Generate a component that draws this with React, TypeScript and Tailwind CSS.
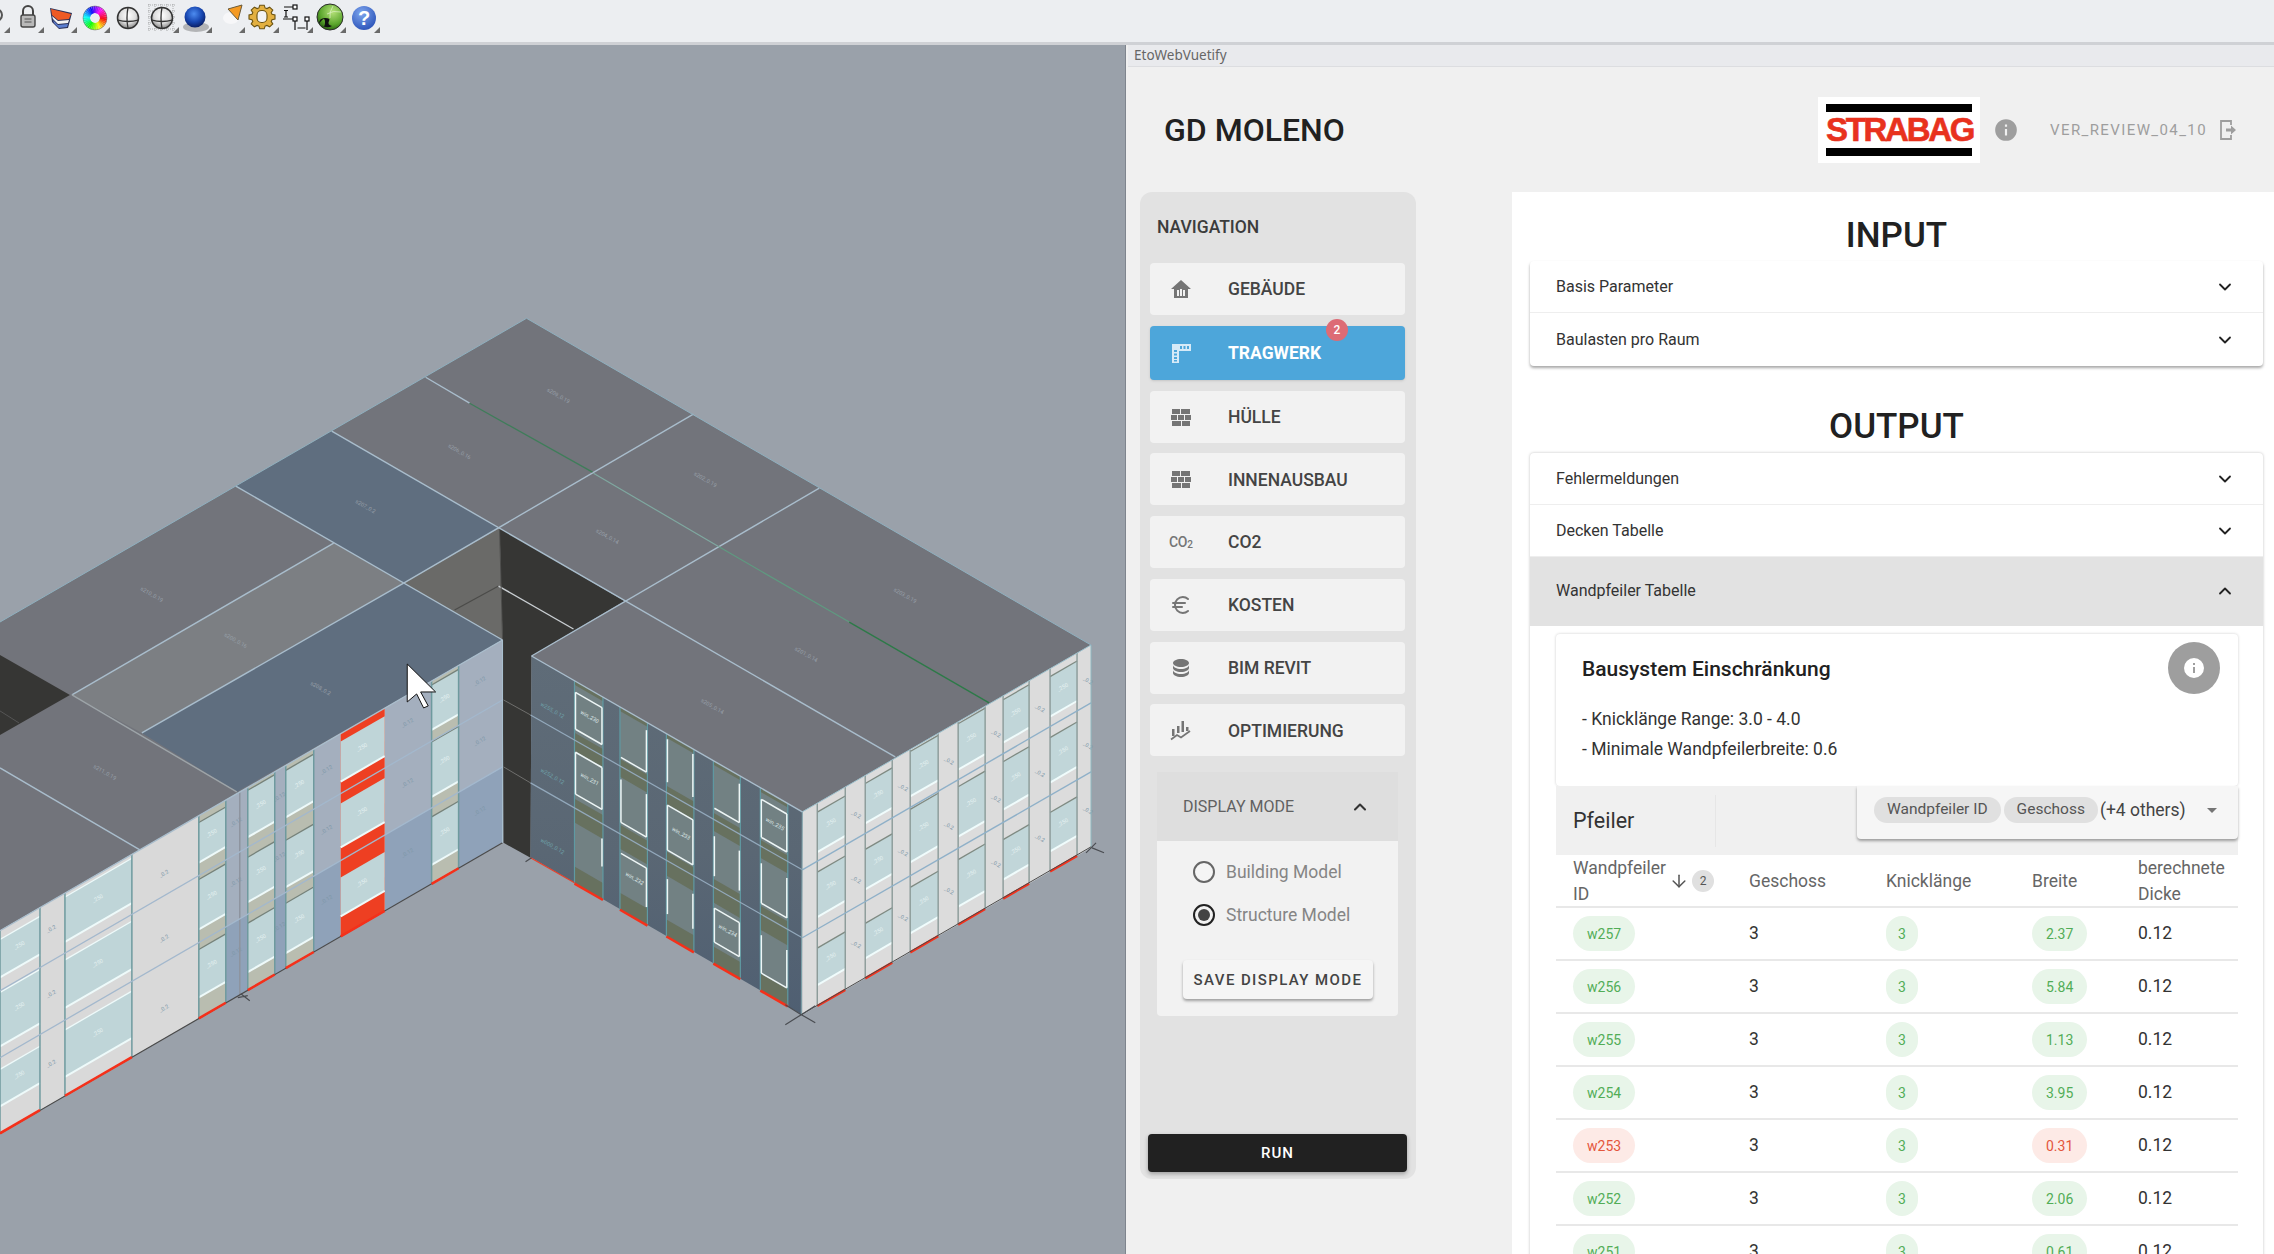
import React from "react";
import { ChevronDown, ChevronUp, ArrowDown, Euro } from "lucide-react";

type P = [number, number];
const pts = (a: P[]) => a.map((p) => p.join(",")).join(" ");
const wallL = (x: number, z: number): P => [x, 640 + (503 - x) * 0.578 + z];
const wallD = (x: number, z: number): P => [x, 656 + (x - 532) * 0.576 + z];
const wallR = (x: number, z: number): P => [x, 812 - (x - 803) * 0.578 + z];
type W = (x: number, z: number) => P;
const para = (f: W, x1: number, x2: number, z1: number, z2: number) => pts([f(x1, z1), f(x2, z1), f(x2, z2), f(x1, z2)]);

const ROOF_LINE = "#a9bdcc";

const lCols: { x: [number, number]; win: [number, number][]; sill: string }[] = [
  { x: [432, 459], win: [[4, 49], [61, 116], [136, 184]], sill: "#b9bdb0" },
  { x: [286, 314], win: [[5, 52], [75, 122], [138, 188]], sill: "#b9bdb0" },
  { x: [248, 275], win: [[3, 50], [70, 115], [136, 185]], sill: "#b9bdb0" },
  { x: [199, 226], win: [[7, 47], [64, 114], [134, 182]], sill: "#b9bdb0" },
  { x: [65, 132], win: [[4, 49], [67, 115], [137, 184]], sill: "#d9d9d9" },
  { x: [0, 40], win: [[9, 47], [62, 116], [139, 176]], sill: "#d9d9d9" },
];
const rCols: { x: [number, number]; win: [number, number][] }[] = [
  { x: [818, 846], win: [[9, 49], [69, 114], [145, 182]] },
  { x: [866, 893], win: [[8, 48], [74, 114], [148, 183]] },
  { x: [911, 939], win: [[2, 47], [60, 113], [138, 184]] },
  { x: [959, 986], win: [[2, 48], [65, 115], [138, 185]] },
  { x: [1004, 1030], win: [[4, 47], [66, 114], [144, 184]] },
  { x: [1051, 1078], win: [[8, 48], [69, 114], [144, 183]] },
];
const dCols: [number, number][] = [[575, 603.5], [620.5, 648], [667, 694.5], [714, 741], [761, 788.5]];
const dFrames: { c: number; z: [number, number]; top?: boolean; bot?: boolean; l?: boolean; r?: boolean }[] = [
  { c: 0, z: [11, 48], top: true, bot: true, l: true, r: true },
  { c: 0, z: [71, 113], top: true, bot: true, l: true, r: true },
  { c: 0, z: [142, 170], r: true },
  { c: 1, z: [8, 50], bot: true, r: true },
  { c: 1, z: [72, 115], bot: true, l: true, r: true },
  { c: 1, z: [146, 185], top: true, r: true },
  { c: 2, z: [5, 48], l: true, r: true },
  { c: 2, z: [71, 116], top: true, bot: true, l: true, r: true },
  { c: 2, z: [145, 180], l: true, r: true },
  { c: 3, z: [8, 47], bot: true, r: true },
  { c: 3, z: [75, 115], l: true, r: true },
  { c: 3, z: [147, 181], top: true, bot: true, l: true, r: true },
  { c: 4, z: [11, 49], top: true, bot: true, l: true, r: true },
  { c: 4, z: [75, 115], bot: true, l: true, r: true },
  { c: 4, z: [147, 185], bot: true, l: true, r: true },
];
const roofLabels: [string, number, number][] = [
  ["s207_0.2", 365, 508], ["s206_0.16", 459, 453], ["s209_0.19", 558, 397], ["s210_0.19", 151, 596],
  ["s200_0.16", 235, 642], ["s208_0.2", 320, 690], ["s211_0.19", 104, 774], ["s202_0.19", 705, 481],
  ["s204_0.14", 607, 538], ["s203_0.19", 905, 597], ["s201_0.14", 806, 656], ["s205_0.14", 712, 708],
];
const Tiny = ({ t, p, rot, fill }: { t: string; p: P; rot: number; fill: string }) => (
  <text x={p[0]} y={p[1]} transform={`rotate(${rot} ${p[0]} ${p[1]})`} textAnchor="middle" fontSize="5.5" fontFamily="Roboto, sans-serif" fill={fill}>{t}</text>
);

function Scene() {
  return (
    <svg viewBox="0 45 1126 1209" className="block w-full h-full">
      <defs>
        <linearGradient id="darkwall" x1="0" y1="0" x2="0" y2="1">
          <stop offset="0" stopColor="#5f6c78" />
          <stop offset="0.55" stopColor="#5a6774" />
          <stop offset="1" stopColor="#4f5f72" />
        </linearGradient>
      </defs>
      {/* roof */}
      <polygon points={pts([[527, 318], [1092, 645], [803, 812], [532, 656], [625, 601], [500, 528], [404, 583], [503, 640], [0, 931], [0, 622]])} fill="#72747b" />
      <polygon points={pts([[334, 543], [404, 583], [142, 733], [72, 695]])} fill="#7c7f83" />
      <polygon points={pts([[332, 431], [236, 486], [404, 583], [500, 528]])} fill="#5f6e7f" />
      <polygon points={pts([[404, 583], [142, 733], [237, 792], [503, 640]])} fill="#5f6e7f" />
      <polygon points={pts([[625, 601], [532, 656], [531, 858], [504, 843], [503, 640], [500, 528]])} fill="#363634" />
      <polygon points={pts([[500, 528], [404, 583], [503, 640]])} fill="#6a6a68" />
      <polygon points={pts([[0, 655], [70, 695], [0, 735]])} fill="#363634" />
      <line x1="0" y1="711" x2="19" y2="723" stroke="#555" />
      <line x1="455" y1="610" x2="499" y2="586" stroke="#4b4b49" strokeWidth="1.2" />
      <line x1="499" y1="586" x2="574" y2="629" stroke="#c9ced2" strokeWidth="1.4" />
      <line x1="500" y1="528" x2="503" y2="640" stroke="#4d4d4b" />
      {/* left wing wall */}
      <polygon points={pts([wallL(503, 0), wallL(0, 0), wallL(0, 203), wallL(503, 203)])} fill="#d9d9d9" />
      {[[459, 503], [385, 432], [314, 341], [275, 286], [226, 248]].map(([a, b]) => (
        <g key={a}>
          <polygon points={para(wallL, a, b, 0, 127)} fill="#a4afbe" />
          <polygon points={para(wallL, a, b, 127, 203)} fill="#8fa2b9" />
          {[30, 90, 160].map((z) => (
            <Tiny key={z} t="_0.12" p={wallL((a + b) / 2, z)} rot={-30} fill="#7d97a8" />
          ))}
        </g>
      ))}
      <polygon points={para(wallL, 341, 385, 0, 203)} fill="#ee3f22" />
      {[[8, 48], [70, 114], [144, 183]].map(([a, b]) => (
        <g key={a}>
          <polygon points={para(wallL, 341, 385, a, b)} fill="#bfd5d8" />
          <line x1={wallL(341, b)[0]} y1={wallL(341, b)[1]} x2={wallL(385, b)[0]} y2={wallL(385, b)[1]} stroke="#eefafa" strokeWidth="2" />
          <Tiny t="_250" p={wallL(363, (a + b) / 2)} rot={-30} fill="#e6f2f2" />
        </g>
      ))}
      {lCols.map((c) => (
        <g key={c.x[0]}>
          <polygon points={para(wallL, c.x[0], c.x[1], 0, 203)} fill={c.sill} />
          {c.win.map(([a, b]) => (
            <g key={a}>
              <polygon points={para(wallL, c.x[0], c.x[1], a, b)} fill="#bfd5d8" />
              <line x1={wallL(c.x[0], b)[0]} y1={wallL(c.x[0], b)[1]} x2={wallL(c.x[1], b)[0]} y2={wallL(c.x[1], b)[1]} stroke="#eefafa" strokeWidth="2" />
              <line x1={wallL(c.x[0], a)[0]} y1={wallL(c.x[0], a)[1]} x2={wallL(c.x[1], a)[0]} y2={wallL(c.x[1], a)[1]} stroke={c.sill === "#d9d9d9" ? "#eefafa" : "#76827a"} strokeWidth="1.3" />
              <Tiny t="_250" p={wallL((c.x[0] + c.x[1]) / 2, (a + b) / 2)} rot={-30} fill="#e6f2f2" />
            </g>
          ))}
          {c.x.map((x) => (
            <line key={x} x1={wallL(x, 0)[0]} y1={wallL(x, 0)[1]} x2={wallL(x, 203)[0]} y2={wallL(x, 203)[1]} stroke="#6e9a9e" strokeWidth="1.5" />
          ))}
        </g>
      ))}
      {[[165, 40], [165, 105], [165, 175], [52, 30], [52, 95], [52, 165]].map(([x, z]) => (
        <Tiny key={`${x}-${z}`} t="_0.2" p={wallL(x, z)} rot={-30} fill="#7d97a8" />
      ))}
      <line x1="240" y1="792" x2="240" y2="995" stroke="#8d949e" strokeWidth="1.5" />
      <line x1="503" y1="700" x2="0" y2="991" stroke="#a3b8cd" strokeWidth="1.3" />
      <line x1="503" y1="767" x2="0" y2="1058" stroke="#a3b8cd" strokeWidth="1.3" />
      <line x1="503" y1="843" x2="0" y2="1134" stroke="#4a4a4a" strokeWidth="1.2" />
      {[[432, 459], [341, 385], [286, 314], [248, 275], [199, 226], [65, 132], [0, 40]].map(([a, b]) => (
        <line key={a} x1={wallL(a, 203)[0]} y1={wallL(a, 203)[1]} x2={wallL(b, 203)[0]} y2={wallL(b, 203)[1]} stroke="#f5301a" strokeWidth="2.5" />
      ))}
      {/* floor lines over dark column */}
      <line x1="504" y1="700" x2="531" y2="715" stroke="#6f6f6d" />
      <line x1="504" y1="767" x2="531" y2="783" stroke="#6f6f6d" />
      <line x1="503" y1="640" x2="503" y2="843" stroke="#a9c0cf" strokeWidth="1" />
      {/* dark facing wall */}
      <polygon points={pts([wallD(532, 0), wallD(803, 0), wallD(802, 203), wallD(531, 202)])} fill="url(#darkwall)" />
      {dCols.map(([a, b]) => (
        <g key={a}>
          <polygon points={para(wallD, a, b, 0, 203)} fill="#67715f" />
          {[[4, 52], [70, 118], [142, 186]].map(([u, v]) => (
            <polygon key={u} points={para(wallD, a, b, u, v)} fill="#728183" />
          ))}
          <line x1={wallD(a, 0)[0]} y1={wallD(a, 0)[1]} x2={wallD(a, 203)[0]} y2={wallD(a, 203)[1]} stroke="#5f9aa3" strokeWidth="1.2" />
          <line x1={wallD(b, 0)[0]} y1={wallD(b, 0)[1]} x2={wallD(b, 203)[0]} y2={wallD(b, 203)[1]} stroke="#5f9aa3" strokeWidth="1.2" />
        </g>
      ))}
      {dFrames.map((f, i) => {
        const [a, b] = dCols[f.c];
        const s = "#eef6f6";
        const L = (p: P, q: P) => <line x1={p[0]} y1={p[1]} x2={q[0]} y2={q[1]} stroke={s} strokeWidth="1.5" />;
        return (
          <g key={i}>
            {f.top && L(wallD(a + 1, f.z[0]), wallD(b - 1, f.z[0]))}
            {f.bot && L(wallD(a + 1, f.z[1]), wallD(b - 1, f.z[1]))}
            {f.l && L(wallD(a + 1, f.z[0]), wallD(a + 1, f.z[1]))}
            {f.r && L(wallD(b - 1, f.z[0]), wallD(b - 1, f.z[1]))}
          </g>
        );
      })}
      <line x1="531" y1="715" x2="803" y2="870" stroke="#93a9bc" strokeWidth="1.2" />
      <line x1="531" y1="783" x2="803" y2="938" stroke="#93a9bc" strokeWidth="1.2" />
      <line x1="531" y1="858" x2="575" y2="883" stroke="#e8402a" strokeWidth="1.2" />
      {dCols.map(([a, b]) => (
        <line key={a} x1={wallD(a, 203)[0]} y1={wallD(a, 203)[1]} x2={wallD(b, 203)[0]} y2={wallD(b, 203)[1]} stroke="#f5301a" strokeWidth="2.5" />
      ))}
      {/* right wall */}
      <polygon points={pts([wallR(803, 0), wallR(1092, 0), wallR(1092, 203), wallR(803, 203)])} fill="#dcdcdc" />
      {rCols.map((c) => (
        <g key={c.x[0]}>
          {c.win.map(([a, b]) => (
            <g key={a}>
              <polygon points={para(wallR, c.x[0], c.x[1], a, b)} fill="#c1d6d9" />
              <line x1={wallR(c.x[0], b)[0]} y1={wallR(c.x[0], b)[1]} x2={wallR(c.x[1], b)[0]} y2={wallR(c.x[1], b)[1]} stroke="#f0fcfc" strokeWidth="2" />
              <line x1={wallR(c.x[0], a)[0]} y1={wallR(c.x[0], a)[1]} x2={wallR(c.x[1], a)[0]} y2={wallR(c.x[1], a)[1]} stroke="#7f8a82" strokeWidth="1.3" />
              <Tiny t="_250" p={wallR((c.x[0] + c.x[1]) / 2, (a + b) / 2)} rot={-30} fill="#e6f2f2" />
            </g>
          ))}
          {c.x.map((x) => (
            <line key={x} x1={wallR(x, 0)[0]} y1={wallR(x, 0)[1]} x2={wallR(x, 203)[0]} y2={wallR(x, 203)[1]} stroke="#8a9a98" strokeWidth="1.4" />
          ))}
          <line x1={wallR(c.x[0], 203)[0]} y1={wallR(c.x[0], 203)[1]} x2={wallR(c.x[1], 203)[0]} y2={wallR(c.x[1], 203)[1]} stroke="#f5301a" strokeWidth="2.5" />
          {[35, 100, 165].map((z) => (
            <Tiny key={z} t="_0.2" p={wallR(c.x[1] + 10, z)} rot={30} fill="#7d97a8" />
          ))}
        </g>
      ))}
      <line x1="803" y1="870" x2="1092" y2="703" stroke="#8fb0c8" strokeWidth="1.4" />
      <line x1="803" y1="938" x2="1092" y2="772" stroke="#8fb0c8" strokeWidth="1.4" />
      <line x1="803" y1="812" x2="802" y2="1015" stroke="#7aa0a8" />
      <line x1="1092" y1="645" x2="1092" y2="847" stroke="#8fb8c0" />
      <line x1="802" y1="1015" x2="1092" y2="847" stroke="#4a4a4a" strokeWidth="1" />
      {/* crosses */}
      <path d="M786 1025L802 1015L816 1023M802 1015L786 1005M802 1015L816 1006" stroke="#4a4d52" strokeWidth="1.2" fill="none" />
      <path d="M1087 853L1097 843M1093 848L1105 853" stroke="#4a4d52" strokeWidth="1.2" fill="none" />
      <path d="M238 998L248 996M241 994L250 1001" stroke="#4a4d52" strokeWidth="1.2" fill="none" />
      <path d="M526 862L532 858" stroke="#4a4d52" strokeWidth="1.2" fill="none" />
      {/* roof lines */}
      <g stroke={ROOF_LINE} strokeWidth="1.4" fill="none">
        <line x1="426" y1="377" x2="470" y2="403" />
        <line x1="332" y1="431" x2="896" y2="757" />
        <line x1="236" y1="486" x2="503" y2="640" />
        <line x1="694" y1="414" x2="404" y2="583" />
        <line x1="404" y1="583" x2="142" y2="733" />
        <line x1="334" y1="543" x2="72" y2="695" />
        <line x1="72" y1="695" x2="237" y2="792" stroke="#9da4a8" />
        <line x1="820" y1="488" x2="532" y2="656" />
        <line x1="0" y1="768" x2="140" y2="850" />
        <line x1="532" y1="656" x2="803" y2="812" />
        <line x1="503" y1="640" x2="0" y2="931" />
        <line x1="0" y1="622" x2="527" y2="318" stroke="#8fb0bf" strokeWidth="1" />
        <line x1="527" y1="318" x2="1092" y2="645" stroke="#8fb0bf" strokeWidth="1" />
        <line x1="1092" y1="645" x2="803" y2="812" stroke="#9cc0cc" strokeWidth="1" />
      </g>
      <line x1="470" y1="403" x2="593" y2="472" stroke="#3f7d5a" strokeWidth="1.3" />
      <line x1="594" y1="473" x2="720" y2="547" stroke="#7fa8a0" strokeWidth="1.2" />
      <line x1="720" y1="547" x2="850" y2="622" stroke="#5f9a80" strokeWidth="1.2" />
      <line x1="850" y1="622" x2="990" y2="703" stroke="#2d7a48" strokeWidth="1.4" />
      {/* tiny labels */}
      {roofLabels.map(([t, x, y]) => (
        <Tiny key={t} t={t} p={[x, y]} rot={30} fill="#979fa8" />
      ))}
      {[["w255_0.12", 552, 712], ["w252_0.12", 552, 778], ["w000_0.12", 552, 848]].map(([t, x, y]) => (
        <Tiny key={t as string} t={t as string} p={[x as number, y as number]} rot={30} fill="#6fa0a8" />
      ))}
      {dFrames.filter((f) => f.top).map((f, i) => {
        const [a, b] = dCols[f.c];
        return <Tiny key={i} t={`win_${230 + i}`} p={wallD((a + b) / 2, (f.z[0] + f.z[1]) / 2)} rot={30} fill="#dfe8e8" />;
      })}
      {/* cursor */}
      <polygon points="407.6,664 407.6,702 417,694 424,708 428.6,706 421,692 436,692" fill="#ffffff" stroke="#111" strokeWidth="1" strokeLinejoin="round" />
    </svg>
  );
}

function ToolbarIcons() {
  const tri = [7, 41, 74, 107, 176, 209, 242, 276, 310, 343, 377];
  const wheel = Array.from({ length: 36 }, (_, i) => i);
  const gear = (() => {
    const cx = 262, cy = 17, out: string[] = [];
    for (let i = 0; i < 8; i++) {
      const a = (i / 8) * Math.PI * 2;
      [[-0.3, 9.5], [-0.17, 12], [0.17, 12], [0.3, 9.5]].forEach(([d, r]) => {
        out.push(`${(cx + Math.cos(a + d) * r * 1.1).toFixed(1)},${(cy + Math.sin(a + d) * r).toFixed(1)}`);
      });
    }
    return out.join(" ");
  })();
  return (
    <svg viewBox="0 0 400 42" className="block w-[400px] h-[42px]">
      <defs>
        <radialGradient id="ball" cx="0.45" cy="0.35" r="0.65">
          <stop offset="0" stopColor="#4d8cf0" />
          <stop offset="0.6" stopColor="#1746b0" />
          <stop offset="1" stopColor="#0a1f66" />
        </radialGradient>
        <radialGradient id="grey" cx="0.5" cy="0.38" r="0.62">
          <stop offset="0" stopColor="#ffffff" />
          <stop offset="0.6" stopColor="#dcdcdc" />
          <stop offset="1" stopColor="#858585" />
        </radialGradient>
        <radialGradient id="green" cx="0.6" cy="0.3" r="0.7">
          <stop offset="0" stopColor="#b6e27a" />
          <stop offset="0.7" stopColor="#5aa52c" />
          <stop offset="1" stopColor="#2f6a14" />
        </radialGradient>
        <radialGradient id="help" cx="0.4" cy="0.3" r="0.75">
          <stop offset="0" stopColor="#7ea6ee" />
          <stop offset="1" stopColor="#2a52b8" />
        </radialGradient>
      </defs>
      <circle cx="-4" cy="15" r="6" fill="none" stroke="#555" strokeWidth="2" />
      {tri.map((x) => (
        <polygon key={x} points={`${x - 3},33 ${x + 3},33 ${x + 3},27`} fill="#6a6a6a" />
      ))}
      {/* lock */}
      <path d="M23 15V11a5 5 0 0 1 10 0v4" fill="none" stroke="#444" strokeWidth="2" />
      <rect x="21" y="15" width="14" height="12" rx="2" fill="#b9b9b9" stroke="#444" strokeWidth="1.4" />
      <path d="M24.5 19h7M24.5 22h7" stroke="#555" strokeWidth="1" />
      {/* layers */}
      <polygon points="50,8 72,13 68,28 59,29 52,22" fill="#2a3158" />
      <polygon points="51,9 71,14 69,19 58,20 52,15" fill="#ee5a24" />
      <polygon points="52,16 58,21 69,20 68,23 58,24 53,19" fill="#f4f4f4" />
      <polygon points="53,20 58,25 68,24 67,27 59,28 54,23" fill="#5c7ed0" />
      {/* wheel */}
      {wheel.map((i) => {
        const a = (i / 36) * Math.PI * 2, b = ((i + 1.2) / 36) * Math.PI * 2;
        return <line key={i} x1={95 + Math.cos(a) * 8.5} y1={18 + Math.sin(a) * 8.5} x2={95 + Math.cos(b) * 8.5} y2={18 + Math.sin(b) * 8.5} stroke={`hsl(${i * 10},95%,52%)`} strokeWidth="7" />;
      })}
      <circle cx="95" cy="18" r="12" fill="none" stroke="#55555590" strokeWidth="0.8" />
      {/* spheres */}
      <circle cx="128" cy="18" r="10.5" fill="url(#grey)" stroke="#333" strokeWidth="1.5" />
      <path d="M117.5 20q10.5 3 21 0M128 7.5q-2 10 0 21" fill="none" stroke="#333" strokeWidth="1.3" />
      <g stroke="#8f8f8f" strokeWidth="0.7" strokeDasharray="1 1">
        {[149, 155, 161, 167, 173].map((x) => <line key={x} x1={x} y1="4" x2={x} y2="31" />)}
        {[5, 11, 17, 23, 29].map((y) => <line key={y} x1="148" y1={y} x2="176" y2={y} />)}
      </g>
      <circle cx="162" cy="18" r="10.5" fill="url(#grey)" stroke="#333" strokeWidth="1.5" />
      <path d="M151.5 20q10.5 3 21 0M162 7.5q-2 10 0 21" fill="none" stroke="#333" strokeWidth="1.3" />
      <ellipse cx="196" cy="27" rx="13" ry="5" fill="#55555560" />
      <circle cx="195" cy="17" r="10.5" fill="url(#ball)" />
      {/* cone */}
      <ellipse cx="231" cy="18" rx="8" ry="6" fill="#f7f7f9" />
      <polygon points="228,9 242,5 238,20" fill="#f59a23" stroke="#6a5a3a" strokeWidth="1" />
      {/* gear */}
      <polygon points={gear} fill="#e3b040" stroke="#6a5210" strokeWidth="1.1" />
      <rect x="257" y="10.5" width="10" height="12" rx="4.5" fill="#f3f3f3" stroke="#6a5210" strokeWidth="1.1" />
      {/* dimension */}
      <g stroke="#111" strokeWidth="1.2" fill="#fff">
        <path d="M284 7h9M286 10.5v6.5M284 10.5h4M284 17h4M283 19h10M295 21v9M307 21v9M297.5 28h8" fill="none" />
        <rect x="293" y="5" width="4" height="4" />
        <rect x="293" y="17" width="4" height="4" />
        <rect x="305" y="17" width="4" height="4" />
      </g>
      {/* globe */}
      <circle cx="330" cy="17" r="13" fill="url(#green)" stroke="#2b2b2b" strokeWidth="1" />
      <path d="M319 24q6-9 6-2t-4 3q6 4 11 1q-5-1-3-5q2-3-4-3q-6 0-6 6z" fill="#0e0e0e" />
      <path d="M327 14q6-4 14-2M333 6q-4 6-3 12" fill="none" stroke="#e0f0c8" strokeWidth="0.7" />
      {/* help */}
      <circle cx="364" cy="18" r="12" fill="url(#help)" />
      <text x="364" y="25" textAnchor="middle" fontSize="20" fontWeight="700" fontFamily="Liberation Sans, sans-serif" fill="#fff">?</text>
    </svg>
  );
}

const mdiPath = {
  wall: "M3 16H12V21H3V16M2 10H8V15H2V10M9 10H15V15H9V10M16 10H22V15H16V10M13 16H21V21H13V16M3 4H11V9H3V4M12 4H21V9H12V4Z",
  db: "M12,3C7.58,3 4,4.79 4,7C4,9.21 7.58,11 12,11C16.42,11 20,9.21 20,7C20,4.79 16.42,3 12,3M4,9V12C4,14.21 7.58,16 12,16C16.42,16 20,14.21 20,12V9C20,11.21 16.42,13 12,13C7.58,13 4,11.21 4,9M4,14V17C4,19.21 7.58,21 12,21C16.42,21 20,19.21 20,17V14C20,16.21 16.42,18 12,18C7.58,18 4,16.21 4,14Z",
  info: "M13,9H11V7H13M13,17H11V11H13M12,2A10,10 0 0,0 2,12A10,10 0 0,0 12,22A10,10 0 0,0 12,2Z",
};
const Fill = ({ d, className }: { d: string; className?: string }) => (
  <svg viewBox="0 0 24 24" className={className} fill="currentColor"><path d={d} fillRule="evenodd" /></svg>
);

const IconHouse = () => (
  <svg viewBox="0 0 24 24" className="w-6 h-6" fill="currentColor">
    <path fillRule="evenodd" d="M12 3L2 12H5V21H19V12H22ZM8 13H10V19H8ZM11 12H13V19H11ZM14 13H16V19H14Z" />
  </svg>
);
const IconRuler = () => (
  <svg viewBox="0 0 24 24" className="w-6 h-6" fill="currentColor">
    <path fillRule="evenodd" d="M3 3H22V10H10V22H3ZM11 5V8H13V5ZM14.5 5V8H16.5V5ZM18 5V8H20V5ZM5 9V11H8V9ZM5 12.5V14.5H8V12.5ZM5 16V18H8V16ZM5 19V20.5H8V19Z" />
  </svg>
);
const IconOpt = () => (
  <svg viewBox="0 0 24 24" className="w-6 h-6" fill="currentColor">
    <rect x="3" y="11" width="2.5" height="7" />
    <rect x="8" y="8" width="2.5" height="7" />
    <rect x="12.5" y="3" width="2.5" height="11" />
    <rect x="17" y="9" width="2.5" height="4" />
    <path d="M2 21.5L8 17L12 19.5L21 13" fill="none" stroke="currentColor" strokeWidth="1.8" />
  </svg>
);
const IconCo2 = () => (
  <span className="flex items-baseline text-[14px] font-medium tracking-[-0.3px]">
    CO<span className="text-[10px] leading-none translate-y-[1px]">2</span>
  </span>
);

const navItems: { label: string; icon: React.ReactNode }[] = [
  { label: "GEBÄUDE", icon: <IconHouse /> },
  { label: "TRAGWERK", icon: <IconRuler /> },
  { label: "HÜLLE", icon: <Fill d={mdiPath.wall} className="w-6 h-6" /> },
  { label: "INNENAUSBAU", icon: <Fill d={mdiPath.wall} className="w-6 h-6" /> },
  { label: "CO2", icon: <IconCo2 /> },
  { label: "KOSTEN", icon: <Euro className="w-6 h-6" strokeWidth={2} /> },
  { label: "BIM REVIT", icon: <Fill d={mdiPath.db} className="w-6 h-6" /> },
  { label: "OPTIMIERUNG", icon: <IconOpt /> },
];

function Nav() {
  return (
    <div className="flex flex-col w-[276px] h-[987px] shrink-0 ml-[12px] rounded-xl bg-[#e2e2e2] pb-[7px]">
      <div className="h-[71px] pl-[17px] flex items-center text-[17.5px] font-medium text-[#3c3c3c]">NAVIGATION</div>
      <div className="flex flex-col gap-[10.75px] ml-[10px] w-[255px]">
        {navItems.map((n) => {
          const active = n.label === "TRAGWERK";
          return (
            <div
              key={n.label}
              className={
                active
                  ? "relative flex items-center h-[54px] rounded bg-[#4da6da] text-white shadow-sm"
                  : "relative flex items-center h-[52px] rounded bg-[#f2f2f2]"
              }
            >
              <span className={active ? "w-[78px] pl-[19px] text-[#d6eaf7]" : "w-[78px] pl-[19px] text-[#757575]"}>{n.icon}</span>
              <span className={active ? "pt-[1px] text-[17.5px] font-bold" : "pt-[1px] text-[17.5px] font-medium text-[#444444]"}>{n.label}</span>
              {active && (
                <span className="absolute left-[176px] top-[-7px] flex items-center justify-center w-[22px] h-[22px] rounded-full bg-[#dd6b75] text-white text-xs font-medium">2</span>
              )}
            </div>
          );
        })}
      </div>
      <div className="ml-[17px] mt-[16px] w-[241px]">
        <div className="flex items-center justify-between h-[69px] pl-[26px] pr-[28px] bg-[#dedede] text-base text-[#616161]">
          <span>DISPLAY MODE</span>
          <ChevronUp className="w-5 h-5 text-[#333333]" strokeWidth={2.5} />
        </div>
        <div className="bg-[#f2f2f2] h-[175px] rounded-b-sm flex flex-col">
          <div className="flex items-center h-[22px] mt-[20px] pl-[36px] gap-[11px] text-[17.5px] text-[#858585]">
            <span className="w-[22px] h-[22px] rounded-full border-2 border-[#666666] bg-[#f5f5f5]" />
            <span>Building Model</span>
          </div>
          <div className="flex items-center h-[22px] mt-[21px] pl-[36px] gap-[11px] text-[17.5px] text-[#858585]">
            <span className="flex items-center justify-center w-[22px] h-[22px] rounded-full border-2 border-[#222222]">
              <span className="w-[12px] h-[12px] rounded-full bg-[#444444]" />
            </span>
            <span>Structure Model</span>
          </div>
          <div className="flex items-center justify-center ml-[26px] mt-[34px] w-[190px] h-[39px] rounded bg-[#f5f5f5] shadow-[0_2px_3px_rgba(0,0,0,0.35)] text-[15px] font-medium tracking-[1.4px] text-[#444444]">
            SAVE DISPLAY MODE
          </div>
        </div>
      </div>
      <div className="mt-auto ml-[8px] w-[259px] h-[38px] rounded bg-[#212121] text-white text-[15px] font-medium tracking-[1px] flex items-center justify-center shadow-[0_2px_4px_rgba(0,0,0,0.3)]">RUN</div>
    </div>
  );
}

function AccRow({ label, tall, last }: { label: string; tall?: boolean; last?: boolean }) {
  const h = tall ? "h-[53px]" : "h-[52px]";
  const b = last ? "" : "border-b border-[#eeeeee]";
  return (
    <div className={`flex items-center justify-between ${h} pl-[26px] pr-[28px] ${b}`}>
      <span className="text-base text-[#333333]">{label}</span>
      <ChevronDown className="w-5 h-5 text-[#222222]" strokeWidth={2.2} />
    </div>
  );
}

const rows: { id: string; b: string; bad?: boolean; badId?: boolean }[] = [
  { id: "w257", b: "2.37" },
  { id: "w256", b: "5.84" },
  { id: "w255", b: "1.13" },
  { id: "w254", b: "3.95" },
  { id: "w253", b: "0.31", bad: true, badId: true },
  { id: "w252", b: "2.06" },
  { id: "w251", b: "0.61" },
];

const Chip = ({ t, bad }: { t: string; bad?: boolean }) => (
  <span className={bad ? "inline-flex items-center h-[35px] px-[14px] rounded-full bg-[#fdeae6] text-[#e4563c] text-sm" : "inline-flex items-center h-[35px] px-[14px] rounded-full bg-[#e8f5e9] text-[#52ad57] text-sm"}>{t}</span>
);

function Table() {
  const cols = "grid grid-cols-[176px_137px_146px_106px_100px] pl-[17px] items-center";
  return (
    <div>
      <div className={`${cols} h-[53px] border-b-2 border-[#e8e8e8] text-[17.5px] text-[#666666]`}>
        <div className="flex items-center">
          <span className="w-[96px] leading-[26px]">Wandpfeiler ID</span>
          <ArrowDown className="w-5 h-5 text-[#555555]" strokeWidth={1.8} />
          <span className="flex items-center justify-center w-[22px] h-[22px] ml-[3px] rounded-full bg-[#e0e0e0] text-xs text-[#555555]">2</span>
        </div>
        <span>Geschoss</span>
        <span>Knicklänge</span>
        <span>Breite</span>
        <span className="leading-[26px]">berechnete Dicke</span>
      </div>
      {rows.map((r) => (
        <div key={r.id} className={`${cols} h-[53px] border-b-2 border-[#e8e8e8] text-[17.5px] text-[#333333]`}>
          <div><Chip t={r.id} bad={r.badId} /></div>
          <span>3</span>
          <div>
            <span className="inline-flex items-center h-[35px] px-[12px] rounded-full bg-[#e8f5e9] text-[#52ad57] text-sm">3</span>
          </div>
          <div><Chip t={r.b} bad={r.bad} /></div>
          <span>0.12</span>
        </div>
      ))}
    </div>
  );
}

function Main() {
  return (
    <div className="flex-1 ml-[96px] bg-white pl-[18px] pr-[11px]">
      <h2 className="flex items-center justify-center h-[69px] pt-[20px] text-[35px] font-medium text-[#212121]">INPUT</h2>
      <div className="rounded shadow-[0_2px_3px_rgba(0,0,0,0.35)] bg-white">
        <AccRow label="Basis Parameter" />
        <AccRow label="Baulasten pro Raum" tall last />
      </div>
      <h2 className="flex items-center justify-center h-[87px] pt-[36px] text-[35px] font-medium text-[#212121]">OUTPUT</h2>
      <div className="rounded-t shadow-[0_0_3px_rgba(0,0,0,0.25)] bg-white">
        <AccRow label="Fehlermeldungen" />
        <AccRow label="Decken Tabelle" />
        <div className="flex items-center justify-between h-[69px] pb-[2px] pl-[26px] pr-[28px] bg-[#e2e2e2]">
          <span className="text-base text-[#333333]">Wandpfeiler Tabelle</span>
          <ChevronUp className="w-5 h-5 text-[#222222]" strokeWidth={2.2} />
        </div>
        <div className="pt-[8px] pl-[26px] pr-[25px]">
          <div className="h-[152px] rounded bg-white shadow-[0_0_3px_rgba(0,0,0,0.2)]">
            <div className="flex items-center justify-between h-[60px] pt-[8px] pl-[26px] pr-[18px]">
              <span className="pt-[3px] text-[21px] font-medium text-[#212121]">Bausystem Einschränkung</span>
              <span className="flex items-center justify-center w-[52px] h-[52px] rounded-full bg-[#9e9e9e]">
                <Fill d={mdiPath.info} className="w-6 h-6 text-white" />
              </span>
            </div>
            <div className="pt-[10px] pl-[26px] text-[17.5px] leading-[30px] text-[#333333]">
              <div>- Knicklänge Range: 3.0 - 4.0</div>
              <div>- Minimale Wandpfeilerbreite: 0.6</div>
            </div>
          </div>
          <div className="flex justify-between h-[69px] bg-[#f0f0f0]">
            <div className="flex items-center w-[160px] h-[52px] mt-[9px] pl-[17px] border-r border-[#e6e6e6] text-[21.5px] text-[#333333]">Pfeiler</div>
            <div className="flex items-center w-[381px] h-[53px] pb-[5px] pl-[17px] bg-[#f6f6f6] rounded-b shadow-[0_2px_3px_rgba(0,0,0,0.35)]">
              <span className="flex items-center h-[26px] px-[13px] rounded-full bg-[#e0e0e0] text-[15.5px] text-[#555555]">Wandpfeiler ID</span>
              <span className="flex items-center h-[26px] ml-[3px] px-[13px] rounded-full bg-[#e0e0e0] text-[15.5px] text-[#555555]">Geschoss</span>
              <span className="ml-[2px] text-[17.5px] text-[#444444]">(+4 others)</span>
              <span className="ml-[21px] w-0 h-0 border-x-[5px] border-x-transparent border-t-[5px] border-t-[#757575]" />
            </div>
          </div>
          <Table />
        </div>
      </div>
    </div>
  );
}

export default function App() {
  return (
    <div className="flex flex-col w-screen h-screen overflow-hidden bg-[#9aa1aa] [font-family:Roboto,sans-serif]">
      <div className="h-[45px] shrink-0 bg-[#eceef1] border-b-[3px] border-[#cfd1d5] overflow-hidden">
        <ToolbarIcons />
      </div>
      <div className="flex flex-1 min-h-0">
        <div className="w-[1126px] shrink-0 bg-[#9aa1aa] border-r border-[#7f858e]">
          <Scene />
        </div>
        <div className="flex-1 flex flex-col min-w-0 bg-[#f0f0f0] pl-[2px] overflow-hidden">
          <div className="flex items-center h-[22px] shrink-0 pl-[6px] bg-[#e9eaed] border-b border-[#dcdde0] text-[13.5px] text-[#666666] [font-family:'Noto_Sans',sans-serif]">EtoWebVuetify</div>
          <div className="flex items-center h-[125px] shrink-0 pl-[36px] pr-[37px]">
            <h1 className="text-[32px] font-medium text-[#212121]">GD MOLENO</h1>
            <div className="ml-auto flex flex-col justify-between w-[162px] h-[66px] py-[7px] px-[8px] bg-white">
              <div className="h-[8px] bg-black" />
              <div className="text-center text-[33px] leading-[30px] font-bold tracking-[-2.3px] text-[#e8321e] [-webkit-text-stroke:0.6px_#e8321e] [font-family:'Liberation_Sans',sans-serif]">STRABAG</div>
              <div className="h-[8px] bg-black" />
            </div>
            <Fill d={mdiPath.info} className="w-[26px] h-[26px] ml-[13px] text-[#9e9e9e]" />
            <span className="ml-[31px] pt-[2px] text-[15px] tracking-[1.4px] text-[#9e9e9e]">VER_REVIEW_04_10</span>
            <svg viewBox="0 0 18 24" className="w-[18px] h-[24px] ml-[12px] text-[#9e9e9e]" fill="none" stroke="currentColor" strokeWidth="1.8">
              <path d="M12 7V3H2V21H12V17" />
              <path d="M7 10.5H12V7.5L17 12L12 16.5V13.5H7Z" fill="currentColor" stroke="none" />
            </svg>
          </div>
          <div className="flex items-start flex-1">
            <Nav />
            <Main />
          </div>
        </div>
      </div>
    </div>
  );
}
